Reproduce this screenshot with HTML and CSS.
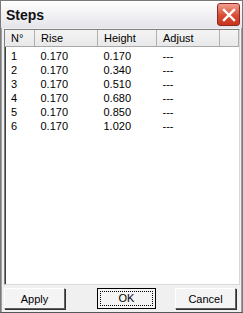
FILE: index.html
```html
<!DOCTYPE html>
<html>
<head>
<title>Steps</title>
<link rel="stylesheet" href="styles.css">
</head>
<body>
  <div class="window">
    <div class="titlebar">
      <span class="title">Steps</span>
      <div class="close-btn">
        <svg width="14" height="14" viewBox="0 0 14 14">
          <path d="M2 2 L12 12 M12 2 L2 12" stroke="#fff" stroke-width="2.4" stroke-linecap="square"/>
        </svg>
      </div>
    </div>
    <div class="content">
      <div class="listview">
        <table class="steps-table">
          <thead>
            <tr>
              <th class="col-n">N°</th>
              <th class="col-rise">Rise</th>
              <th class="col-height">Height</th>
              <th class="col-adjust">Adjust</th>
              <th class="col-rest"></th>
            </tr>
          </thead>
          <tbody>
            <tr><td>1</td><td>0.170</td><td>0.170</td><td>---</td><td></td></tr>
            <tr><td>2</td><td>0.170</td><td>0.340</td><td>---</td><td></td></tr>
            <tr><td>3</td><td>0.170</td><td>0.510</td><td>---</td><td></td></tr>
            <tr><td>4</td><td>0.170</td><td>0.680</td><td>---</td><td></td></tr>
            <tr><td>5</td><td>0.170</td><td>0.850</td><td>---</td><td></td></tr>
            <tr><td>6</td><td>0.170</td><td>1.020</td><td>---</td><td></td></tr>
          </tbody>
        </table>
      </div>
      <div class="buttons">
        <button class="btn btn-apply">Apply</button>
        <button class="btn btn-default"><span class="focus">OK</span></button>
        <button class="btn btn-cancel">Cancel</button>
      </div>
    </div>
  </div>
</body>
</html>
```

FILE: styles.css
```css
html, body {
  margin: 0;
  padding: 0;
}

body {
  font-family: "Liberation Sans", Arial, sans-serif;
  font-size: 11px;
  color: #000;
  background: #fff;
}

.window {
  width: 243px;
  height: 313px;
  box-sizing: border-box;
  background: #f0f0f0;
  border: 1px solid #7a7a7a;
  border-bottom-color: #555;
  display: flex;
  flex-direction: column;
}

.titlebar {
  height: 27px;
  box-sizing: border-box;
  display: flex;
  align-items: center;
  justify-content: space-between;
  padding: 0 2px 0 5px;
  background: linear-gradient(#ffffff, #e4e4ea);
}

.title {
  font-weight: bold;
  font-size: 14px;
  color: #111;
}

.close-btn {
  width: 21px;
  height: 21px;
  border: 1px solid #8a2a20;
  border-radius: 3px;
  background: linear-gradient(#f0a090, #d84c34 55%, #c8341e);
  display: flex;
  align-items: center;
  justify-content: center;
}

.content {
  flex: 1;
  display: flex;
  flex-direction: column;
  padding: 1px 1px 2px 2px;
  border-left: 1px solid #a0a0a0;
  border-right: 1px solid #a0a0a0;
}

.listview {
  flex: 1;
  background: #fff;
  border: 1px solid #808080;
  border-right-color: #d8d8d8;
  border-bottom-color: #d8d8d8;
  box-shadow: inset 1px 1px 0 #404040;
}

.steps-table {
  border-collapse: collapse;
  table-layout: fixed;
  width: 100%;
}

.steps-table th {
  height: 16px;
  font-weight: normal;
  text-align: left;
  padding: 0 0 0 6px;
  background: linear-gradient(#f4f4f4, #e8e8e8);
  border-right: 1px solid #b0b0b0;
  border-bottom: 1px solid #a8a8a8;
}

.col-n { width: 23px; }
.col-rise { width: 56px; }
.col-height { width: 52px; }
.col-adjust { width: 56px; }

.steps-table td {
  height: 14px;
  padding: 0 0 0 6px;
  line-height: 14px;
  white-space: nowrap;
}

.steps-table tbody tr:first-child td {
  padding-top: 2px;
}

.buttons {
  display: flex;
  align-items: center;
  padding: 3px 0 1px 0;
}

.btn {
  width: 61px;
  height: 21px;
  font-family: "Liberation Sans", Arial, sans-serif;
  font-size: 11px;
  background: #f4f4f4;
  border: 1px solid #fff;
  border-right-color: #606060;
  border-bottom-color: #606060;
  box-shadow: 1px 1px 0 #303030;
  padding: 0;
}

.btn-default {
  width: 59px;
  margin-left: 32px;
  border: 1px solid #000;
  box-shadow: none;
  display: flex;
  align-items: center;
  justify-content: center;
}

.btn-cancel {
  margin-left: 19px;
}

.focus {
  display: block;
  width: 53px;
  height: 15px;
  line-height: 13px;
  border: 1px dotted #000;
  box-sizing: border-box;
}
```
